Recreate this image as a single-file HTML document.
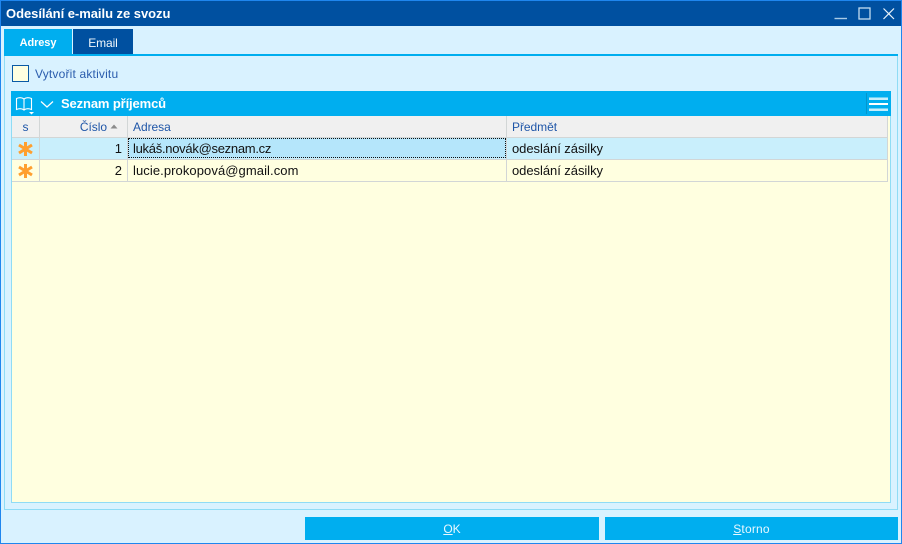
<!DOCTYPE html>
<html lang="cs"><head><meta charset="utf-8"><title>Odesílání e-mailu ze svozu</title>
<style>
html,body{margin:0;padding:0;width:902px;height:544px;overflow:hidden;background:#d9f2ff;font-family:"Liberation Sans",sans-serif}
div{position:absolute;box-sizing:border-box;white-space:nowrap}
.t{font-size:12px;line-height:16px}
.h{color:#1f56a8;font-size:12px;line-height:16px;letter-spacing:-.05px}
.c{color:#111;font-size:13px;line-height:16px}
.l{background:#d2d6d6}
</style></head><body>
<div style="left:0;top:0;width:902px;height:544px;border:1px solid #1f86ee"></div>
<div style="left:1px;top:1px;width:900px;height:25px;background:#0050a0"></div>
<div style="left:6px;top:6px;color:#fff;font-size:13px;line-height:16px;font-weight:bold;letter-spacing:-.04px">Odesílání e-mailu ze svozu</div>
<svg style="position:absolute;left:830px;top:0" width="70" height="26" fill="none">
<path d="M4.500 18.500H17" stroke="#a9cbe6" stroke-width="1.400"/>
<rect x="29" y="8" width="11" height="11" stroke="#c3dcf0" stroke-width="1.300"/>
<path d="M53.500 8.500L64 19M64 8.500L53.500 19" stroke="#e8f2fa" stroke-width="1.200"/>
</svg>

<div style="left:4px;top:29px;width:68px;height:25px;background:#00aeef"></div>
<div style="left:4px;top:36px;width:68px;color:#fff;text-align:center;font-size:11px;line-height:14px;font-weight:bold;letter-spacing:-.1px">Adresy</div>
<div style="left:73px;top:29px;width:60px;height:25px;background:#0050a0"></div>
<div style="left:73px;top:35px;width:60px;color:#f0f6fb;text-align:center;font-size:12px;line-height:16px;letter-spacing:-.1px">Email</div>

<div style="left:4px;top:54px;width:894px;height:456px;border:1px solid #8fdcf5;border-top:0"></div>
<div style="left:4px;top:54px;width:894px;height:2px;background:#00aeef"></div>

<div style="left:12px;top:65px;width:17px;height:17px;background:#ffffe0;border:1px solid #0a5aa5"></div>
<div class="t" style="left:35px;top:66px;color:#2a5cad;letter-spacing:.18px">Vytvořit aktivitu</div>

<div style="left:11px;top:91px;width:880px;height:412px;background:#ffffe0;border:1px solid #8fdcf5"></div>
<div style="left:11px;top:91px;width:880px;height:25px;background:#00aeef"></div>
<svg style="position:absolute;left:14px;top:95px" width="44" height="20" fill="none" stroke="#fff" stroke-width="1.100">
<path d="M2.500 3.500C5 2.500 8 2.500 10 4C12 2.500 15 2.500 17.500 3.500V14.500C15 13.500 12 13.500 10 15C8 13.500 5 13.500 2.500 14.500Z"/>
<path d="M10 4V15"/>
<path d="M15 17H20L17.500 19.500Z" fill="#fff" stroke="none"/>
<path d="M27 6.500L33 12L39 6.500" stroke-width="1.200"/>
</svg>
<div style="left:61px;top:96px;color:#fff;font-size:13px;line-height:16px;font-weight:bold;letter-spacing:-.13px">Seznam příjemců</div>
<div style="left:866px;top:93px;width:1px;height:21px;background:#0496cc"></div>
<div style="left:869px;top:97px;width:19px;height:1px;background:#66d0f5"></div>
<div style="left:869px;top:98px;width:19px;height:2px;background:#c4eefc"></div>
<div style="left:869px;top:103px;width:19px;height:2px;background:#fff"></div>
<div style="left:869px;top:108px;width:19px;height:1px;background:#66d0f5"></div>
<div style="left:869px;top:109px;width:19px;height:2px;background:#c4eefc"></div>

<div style="left:12px;top:116px;width:876px;height:21px;background:#f0f0f0"></div>
<div style="left:12px;top:138px;width:876px;height:21px;background:#c9effc"></div>
<div class="l" style="left:12px;top:137px;width:876px;height:1px"></div>
<div class="l" style="left:12px;top:159px;width:876px;height:1px"></div>
<div class="l" style="left:12px;top:181px;width:876px;height:1px"></div>
<div class="l" style="left:39px;top:116px;width:1px;height:66px"></div>
<div class="l" style="left:127px;top:116px;width:1px;height:66px"></div>
<div class="l" style="left:506px;top:116px;width:1px;height:66px"></div>
<div class="l" style="left:887px;top:116px;width:1px;height:66px"></div>

<div class="h" style="left:12px;top:119px;width:27px;text-align:center">s</div>
<div class="h" style="left:40px;top:119px;width:67px;text-align:right">Číslo</div>
<svg style="position:absolute;left:110px;top:124px" width="9" height="5"><path d="M0.500 4.500L4 0.500L7.500 4.500Z" fill="#8b8b8b"/></svg>
<div class="h" style="left:133px;top:119px">Adresa</div>
<div class="h" style="left:512px;top:119px">Předmět</div>

<div style="left:128px;top:138px;width:378px;height:20px;background:#b5e6fb;outline:1px dotted #111;outline-offset:-1px"></div>

<svg style="position:absolute;left:17px;top:140px" width="18" height="40" fill="none" stroke="#ff9f2e" stroke-width="3">
<path d="M8.500 2V16M2 5L15 13M15 5L2 13"/>
<path d="M8.500 24V38M2 27L15 35M15 27L2 35"/>
</svg>

<div class="c" style="left:40px;top:141px;width:82px;text-align:right">1</div>
<div class="c" style="left:133px;top:141px;letter-spacing:-.28px">lukáš.novák@seznam.cz</div>
<div class="c" style="left:512px;top:141px;letter-spacing:-.05px">odeslání zásilky</div>
<div class="c" style="left:40px;top:163px;width:82px;text-align:right">2</div>
<div class="c" style="left:133px;top:163px;letter-spacing:.08px">lucie.prokopová@gmail.com</div>
<div class="c" style="left:512px;top:163px;letter-spacing:-.05px">odeslání zásilky</div>

<div style="left:305px;top:517px;width:294px;height:23px;background:#00aeef"></div>
<div style="left:305px;top:521px;width:294px;color:#e8f8ff;text-align:center;font-size:12px;line-height:16px"><u>O</u>K</div>
<div style="left:605px;top:517px;width:293px;height:23px;background:#00aeef"></div>
<div style="left:605px;top:521px;width:293px;color:#e8f8ff;text-align:center;font-size:12px;line-height:16px;letter-spacing:.2px"><u>S</u>torno</div>
</body></html>
